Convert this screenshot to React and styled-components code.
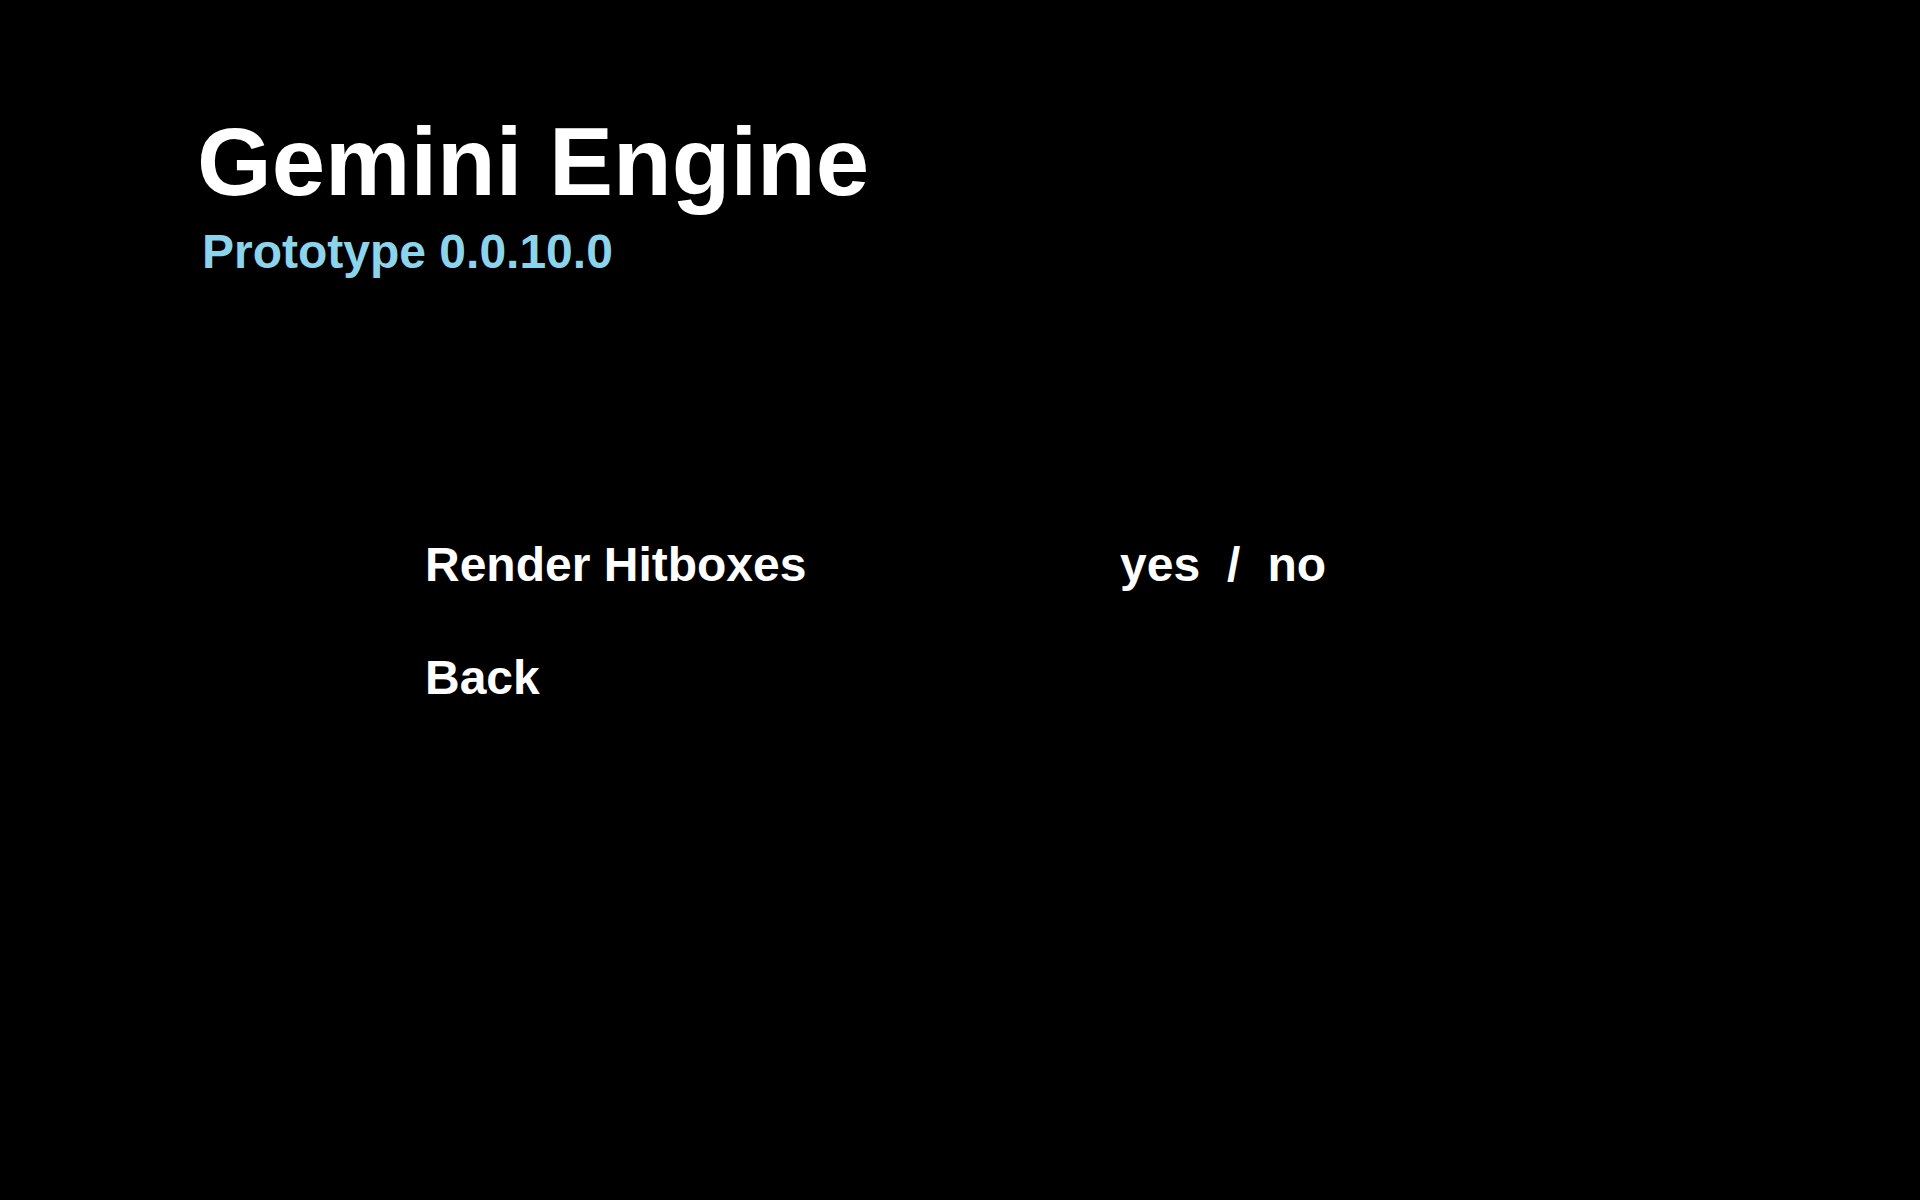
import styled, { createGlobalStyle } from 'styled-components';

const GlobalStyle = createGlobalStyle`
    html, body {
        margin: 0;
        padding: 0;
        background: #000;
    }
    body {
        font-family: "Liberation Sans", Arial, sans-serif;
    }
`;

const Screen = styled.div`
    width: 1920px;
    height: 1200px;
    background: #000;
    color: #fff;
    display: flex;
    flex-direction: column;
    padding: 114px 0 0 197px;
    box-sizing: border-box;
    overflow: hidden;
`;

const TitleBlock = styled.header`
    display: flex;
    flex-direction: column;
    gap: 18px;
`;

const Title = styled.h1`
    margin: 0;
    font-size: 96px;
    line-height: 1;
    font-weight: 700;
    color: #fff;
`;

const Version = styled.div`
    margin-left: 5px;
    font-size: 48px;
    line-height: 1;
    font-weight: 700;
    color: #8cd4ec;
`;

const Menu = styled.div`
    margin: 265px 0 0 228px;
    display: flex;
    flex-direction: column;
    gap: 65px;
`;

const Row = styled.div`
    display: grid;
    grid-template-columns: 695px auto;
    font-size: 48px;
    line-height: 1;
    font-weight: 700;
    color: #fff;
`;

const Choice = styled.div`
    display: flex;
    gap: 27px;
`;

const options = [
    { label: 'Render Hitboxes', values: ['yes', '/', 'no'] },
    { label: 'Back' },
];

const App = () => {
    return (
        <Screen>
            <GlobalStyle />
            <TitleBlock>
                <Title>Gemini Engine</Title>
                <Version>Prototype 0.0.10.0</Version>
            </TitleBlock>
            <Menu>
                {options.map((o) => (
                    <Row key={o.label}>
                        <span>{o.label}</span>
                        {o.values && (
                            <Choice>
                                {o.values.map((v) => <span key={v}>{v}</span>)}
                            </Choice>
                        )}
                    </Row>
                ))}
            </Menu>
        </Screen>
    );
};

export default App;
